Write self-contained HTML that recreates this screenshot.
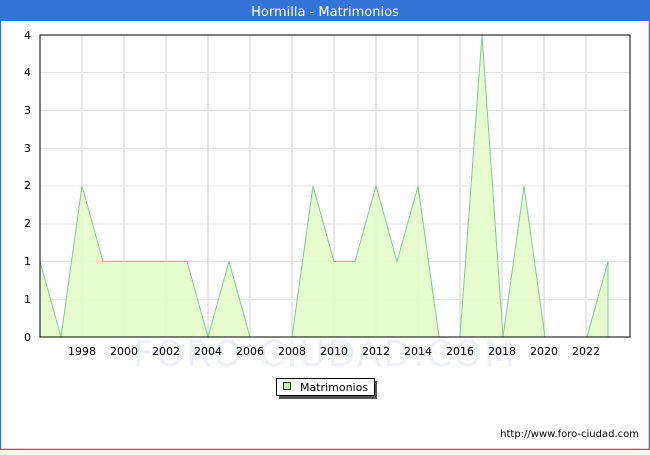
<!DOCTYPE html>
<html><head><meta charset="utf-8"><style>
html,body{margin:0;padding:0;background:#fff}
svg text{font-family:"DejaVu Sans","Liberation Sans",sans-serif}
</style></head><body>
<svg width="650" height="450" viewBox="0 0 650 450" xmlns="http://www.w3.org/2000/svg">
<rect x="0.5" y="0.5" width="649" height="449" fill="#fff" stroke="#3473d6" stroke-width="1.5"/>
<rect x="0" y="0" width="650" height="21" fill="#3473d6"/>
<text x="325" y="16" fill="#fff" font-size="13" text-anchor="middle">Hormilla - Matrimonios</text>
<text x="325" y="366" fill="#eef0f8" font-size="36" text-anchor="middle" letter-spacing="2">FORO-CIUDAD.COM</text>
<g stroke="#d0d0d0" stroke-width="1">
<line x1="82" y1="35" x2="82" y2="337"/><line x1="124" y1="35" x2="124" y2="337"/><line x1="166" y1="35" x2="166" y2="337"/><line x1="208" y1="35" x2="208" y2="337"/><line x1="250" y1="35" x2="250" y2="337"/><line x1="292" y1="35" x2="292" y2="337"/><line x1="334" y1="35" x2="334" y2="337"/><line x1="376" y1="35" x2="376" y2="337"/><line x1="418" y1="35" x2="418" y2="337"/><line x1="460" y1="35" x2="460" y2="337"/><line x1="502" y1="35" x2="502" y2="337"/><line x1="544" y1="35" x2="544" y2="337"/><line x1="586" y1="35" x2="586" y2="337"/>
</g>
<g stroke="#e4e4e4" stroke-width="1">
<line x1="40" y1="72.5" x2="630" y2="72.5"/><line x1="40" y1="110.5" x2="630" y2="110.5"/><line x1="40" y1="148.5" x2="630" y2="148.5"/><line x1="40" y1="186" x2="630" y2="186"/><line x1="40" y1="224" x2="630" y2="224"/><line x1="40" y1="261.5" x2="630" y2="261.5"/><line x1="40" y1="299.5" x2="630" y2="299.5"/>
</g>
<polygon fill="#e3fcc9" fill-opacity="0.9" stroke="#7fcc90" stroke-width="1" points="40,337 40,261.5 61,337 82,186 103,261.5 187,261.5 208,337 229,261.5 250,337 292,337 313,186 334,261.5 355,261.5 376,186 397,261.5 418,186 439,337 460,337 482,35 503,337 524,186 545,337 587,337 608,261.5 608,337"/>
<rect x="40" y="35" width="590" height="302" fill="none" stroke="#000" stroke-width="1"/>
<g font-size="11" fill="#000" text-anchor="end">
<text x="31" y="341">0</text><text x="31" y="303">1</text><text x="31" y="265">1</text><text x="31" y="227">2</text><text x="31" y="189">2</text><text x="31" y="152">3</text><text x="31" y="114">3</text><text x="31" y="76">4</text><text x="31" y="39">4</text>
</g>
<g font-size="11" fill="#000" text-anchor="middle">
<text x="82" y="355">1998</text><text x="124" y="355">2000</text><text x="166" y="355">2002</text><text x="208" y="355">2004</text><text x="250" y="355">2006</text><text x="292" y="355">2008</text><text x="334" y="355">2010</text><text x="376" y="355">2012</text><text x="418" y="355">2014</text><text x="460" y="355">2016</text><text x="502" y="355">2018</text><text x="544" y="355">2020</text><text x="586" y="355">2022</text>
</g>
<rect x="279" y="381" width="98" height="18" fill="#555"/>
<rect x="276.5" y="378.5" width="98" height="17" fill="#fff" stroke="#000"/>
<rect x="283.5" y="382.5" width="7" height="7" fill="#cdf5a8" stroke="#000" stroke-width="0.8"/>
<text x="300" y="391" font-size="11">Matrimonios</text>
<text x="639" y="437" font-size="10" text-anchor="end">http://www.foro-ciudad.com</text>
</svg>
</body></html>
